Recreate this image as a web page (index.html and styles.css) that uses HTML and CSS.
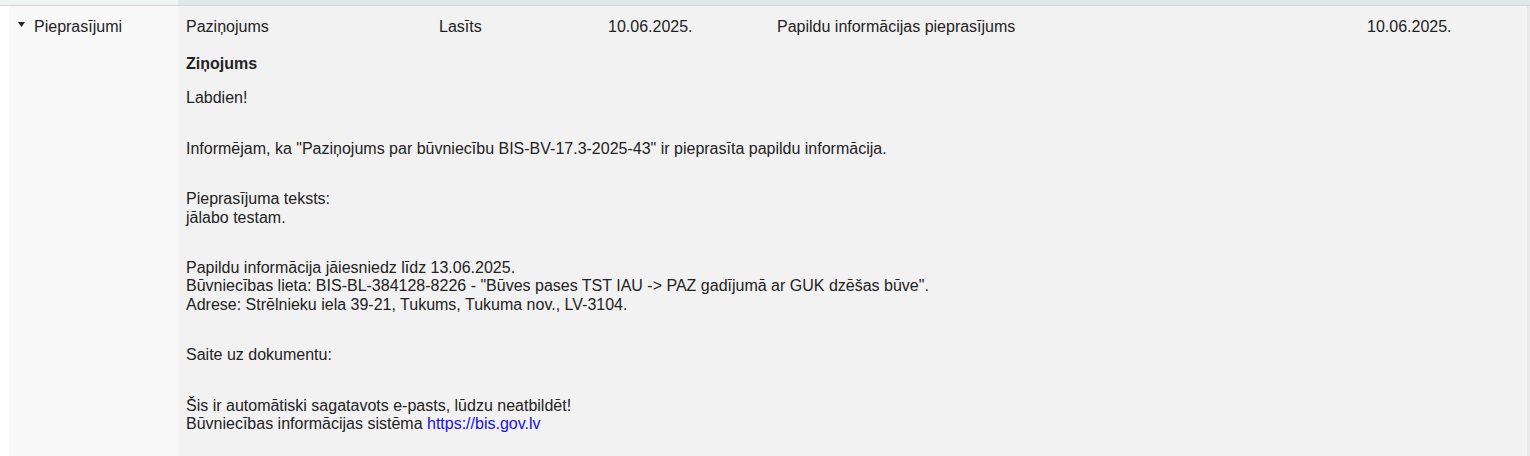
FILE: index.html
```html
<!DOCTYPE html>
<html lang="lv">
<head>
<meta charset="utf-8">
<title>Pieprasījumi</title>
<link rel="stylesheet" href="styles.css">
</head>
<body>
<div class="strip">
  <div class="strip-left"></div>
  <div class="strip-main"></div>
</div>
<div class="row">
  <div class="side">
    <svg class="caret" width="7" height="5" viewBox="0 0 7 5" aria-hidden="true"><polygon points="0,0 7,0 3.5,5" fill="#222"/></svg>
    <span>Pieprasījumi</span>
  </div>
  <div class="main">
    <div class="head">
      <span>Paziņojums</span>
      <span>Lasīts</span>
      <span>10.06.2025.</span>
      <span>Papildu informācijas pieprasījums</span>
      <span>10.06.2025.</span>
    </div>
    <div class="msg">
      <h4 class="title">Ziņojums</h4>
      <p>Labdien!</p>
      <p>Informējam, ka "Paziņojums par būvniecību BIS-BV-17.3-2025-43" ir pieprasīta papildu informācija.</p>
      <p>Pieprasījuma teksts:<br>jālabo testam.</p>
      <p>Papildu informācija jāiesniedz līdz 13.06.2025.<br>Būvniecības lieta: BIS-BL-384128-8226 - "Būves pases TST IAU -&gt; PAZ gadījumā ar GUK dzēšas būve".<br>Adrese: Strēlnieku iela 39-21, Tukums, Tukuma nov., LV-3104.</p>
      <p>Saite uz dokumentu:</p>
      <p>Šis ir automātiski sagatavots e-pasts, lūdzu neatbildēt!<br>Būvniecības informācijas sistēma <a href="#">https://bis.gov.lv</a></p>
    </div>
  </div>
</div>
</body>
</html>
```

FILE: styles.css
```css
html, body {
  margin: 0;
  padding: 0;
  background: #ffffff;
}
body {
  font-family: "Liberation Sans", Arial, sans-serif;
  font-size: 16px;
  color: #222222;
  overflow: hidden;
}
.strip {
  display: flex;
  height: 5px;
  border-bottom: 1px solid #d5d7d7;
}
.strip-left {
  width: 178px;
  background: #eef3f4;
}
.strip-main {
  flex: 1;
  background: #e1e8ea;
}
.row {
  display: flex;
  margin-left: 9px;
  min-height: 460px;
}
.side {
  width: 169px;
  box-sizing: border-box;
  background: #f9f9f9;
  padding: 12px 8px 8px 9px;
  display: flex;
  align-items: flex-start;
  gap: 9px;
  line-height: 18px;
}
.caret {
  margin-top: 4px;
  flex: none;
}
.main {
  flex: 1;
  background: #f2f2f2;
  border-right: 3px solid #e9e9e9;
  padding: 12px 0 8px 8px;
}
.head {
  display: grid;
  grid-template-columns: 253px 169px 169px 590px 1fr;
  line-height: 18px;
}
.msg {
  padding-top: 19px;
  line-height: 18.4px;
}
.title {
  margin: 0 0 16px;
  font-size: 16px;
  font-weight: bold;
  line-height: 18.4px;
}
.msg p {
  margin: 0 0 32px;
}
.msg a {
  color: #1a0dee;
  text-decoration: none;
}
```
